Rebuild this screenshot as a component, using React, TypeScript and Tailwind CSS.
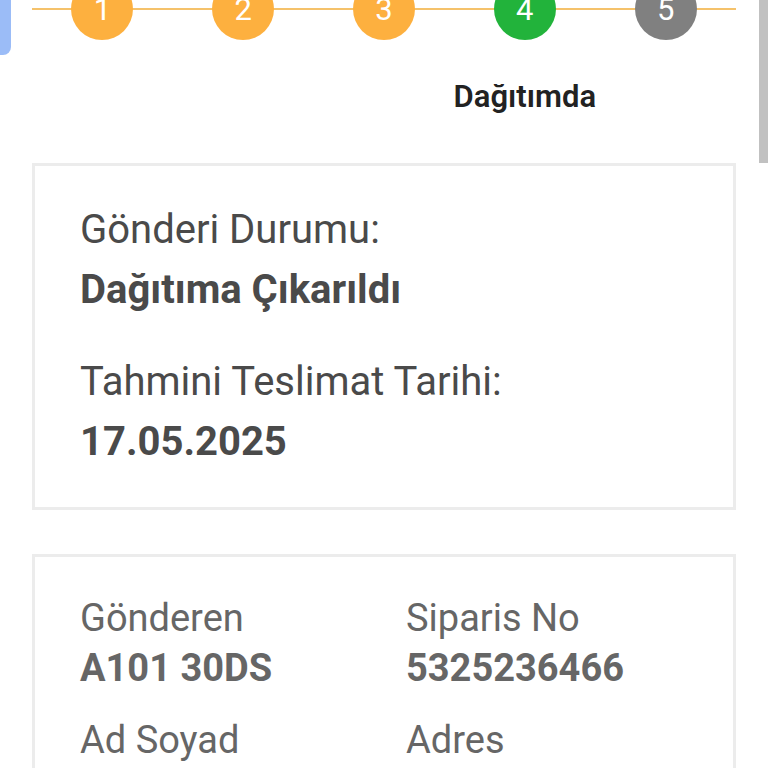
const steps = [
  { n: 1, color: 'bg-[#fdb03f]' },
  { n: 2, color: 'bg-[#fdb03f]' },
  { n: 3, color: 'bg-[#fdb03f]' },
  { n: 4, color: 'bg-[#22b33b]', label: 'Dağıtımda' },
  { n: 5, color: 'bg-[#808080]' },
]

function Stepper() {
  return (
    <div className="relative mx-[32px] mt-[-22px] w-[704px]">
      <div className="absolute left-0 right-0 top-[30px] h-[2px] bg-[#f5c26b]" />
      <div className="relative grid grid-cols-5">
        {steps.map((s) => (
          <div key={s.n} className="flex flex-col items-center">
            <div
              className={`flex h-[62px] w-[62px] items-center justify-center rounded-full text-[31px] leading-none text-white ${s.color}`}
            >
              {s.n}
            </div>
            {s.label && (
              <div className="mt-[38px] whitespace-nowrap text-[31px] font-semibold leading-[38px] text-[#222]">
                {s.label}
              </div>
            )}
          </div>
        ))}
      </div>
    </div>
  )
}

function StatusCard() {
  return (
    <div className="mx-[32px] mt-[47px] w-[704px] border-[3px] border-[#ececec] pb-[35px] pl-[45px] pt-[34px] text-[40px] leading-[60px] text-[#4a4a4a]">
      <div>Gönderi Durumu:</div>
      <div className="font-bold">Dağıtıma Çıkarıldı</div>
      <div className="mt-[32px]">Tahmini Teslimat Tarihi:</div>
      <div className="font-bold">17.05.2025</div>
    </div>
  )
}

function InfoCard() {
  return (
    <div className="mx-[32px] mt-[44px] w-[704px] border-[3px] border-[#ececec] pl-[45px] pt-[36px] pb-[30px] text-[38px] leading-[50px] text-[#666]">
      <div className="grid grid-cols-[326px_1fr] gap-y-[22px]">
        <div>
          <div>Gönderen</div>
          <div className="font-bold">A101 30DS</div>
        </div>
        <div>
          <div>Siparis No</div>
          <div className="font-bold">5325236466</div>
        </div>
        <div>
          <div>Ad Soyad</div>
          <div className="font-bold">A*** Y****</div>
        </div>
        <div>
          <div>Adres</div>
          <div className="font-bold">Istanbul</div>
        </div>
      </div>
    </div>
  )
}

export default function App() {
  return (
    <div className="relative h-[768px] w-[768px] overflow-hidden bg-white font-['Roboto',sans-serif]">
      <Stepper />
      <StatusCard />
      <InfoCard />
      <div className="absolute left-0 top-0 h-[55px] w-[11px] rounded-br-[8px] bg-[#9bbcf7]" />
      <div className="absolute right-0 top-0 h-[163px] w-[9px] bg-[#c1c1c1]" />
    </div>
  )
}
